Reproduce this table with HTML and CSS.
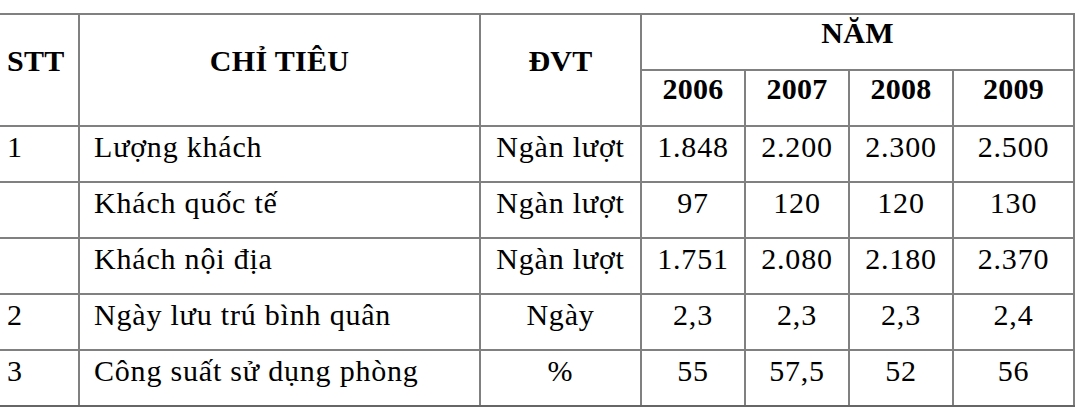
FILE: index.html
```html
<!DOCTYPE html>
<html lang="vi">
<head>
    <meta charset="UTF-8">
    <meta name="viewport" content="width=device-width, initial-scale=1.0">
    <title>Chỉ tiêu du lịch 2006 - 2009</title>
    <link rel="stylesheet" href="styles.css">
</head>
<body>
    <table class="data-table">
        <colgroup>
            <col class="col-stt">
            <col class="col-name">
            <col class="col-unit">
            <col class="col-year">
            <col class="col-year">
            <col class="col-year">
            <col class="col-year-last">
        </colgroup>
        <thead>
            <tr>
                <th rowspan="2" class="left">STT</th>
                <th rowspan="2">CHỈ TIÊU</th>
                <th rowspan="2">ĐVT</th>
                <th colspan="4">NĂM</th>
            </tr>
            <tr>
                <th>2006</th>
                <th>2007</th>
                <th>2008</th>
                <th>2009</th>
            </tr>
        </thead>
        <tbody>
            <tr>
                <td class="left">1</td>
                <td class="left">Lượng khách</td>
                <td>Ngàn lượt</td>
                <td>1.848</td>
                <td>2.200</td>
                <td>2.300</td>
                <td>2.500</td>
            </tr>
            <tr>
                <td class="left"></td>
                <td class="left">Khách quốc tế</td>
                <td>Ngàn lượt</td>
                <td>97</td>
                <td>120</td>
                <td>120</td>
                <td>130</td>
            </tr>
            <tr>
                <td class="left"></td>
                <td class="left">Khách nội địa</td>
                <td>Ngàn lượt</td>
                <td>1.751</td>
                <td>2.080</td>
                <td>2.180</td>
                <td>2.370</td>
            </tr>
            <tr>
                <td class="left">2</td>
                <td class="left">Ngày lưu trú bình quân</td>
                <td>Ngày</td>
                <td>2,3</td>
                <td>2,3</td>
                <td>2,3</td>
                <td>2,4</td>
            </tr>
            <tr>
                <td class="left">3</td>
                <td class="left">Công suất sử dụng phòng</td>
                <td>%</td>
                <td>55</td>
                <td>57,5</td>
                <td>52</td>
                <td>56</td>
            </tr>
        </tbody>
    </table>
</body>
</html>
```

FILE: styles.css
```css
body {
    font-family: "Liberation Serif", "DejaVu Serif", serif;
    margin: 0;
    padding: 0;
    background: #ffffff;
    color: #000000;
    overflow: hidden;
}

.data-table {
    margin: 13px 0 0 -6px;
    border-collapse: collapse;
    table-layout: fixed;
    width: 1081px;
    font-family: "Liberation Serif", "DejaVu Serif", serif;
    font-size: 30px;
}

.col-stt {
    width: 84px;
}

.col-name {
    width: 401px;
}

.col-unit {
    width: 161px;
}

.col-year {
    width: 104px;
}

.col-year-last {
    width: 121px;
}

th, td {
    font-family: "Liberation Serif", "DejaVu Serif", serif;
    border: 2px solid #808080;
    padding: 0 4px 14px;
    height: 56px;
    box-sizing: border-box;
    text-align: center;
    vertical-align: middle;
    white-space: nowrap;
    line-height: 34px;
}

th {
    font-weight: bold;
    padding-bottom: 18px;
    letter-spacing: 0.3px;
}

td {
    letter-spacing: 0.8px;
}

.left {
    text-align: left;
    padding-left: 11px;
}

tbody td.left + td.left {
    padding-left: 14px;
}

tbody tr:last-child td {
    border-bottom-color: #666666;
}
```
